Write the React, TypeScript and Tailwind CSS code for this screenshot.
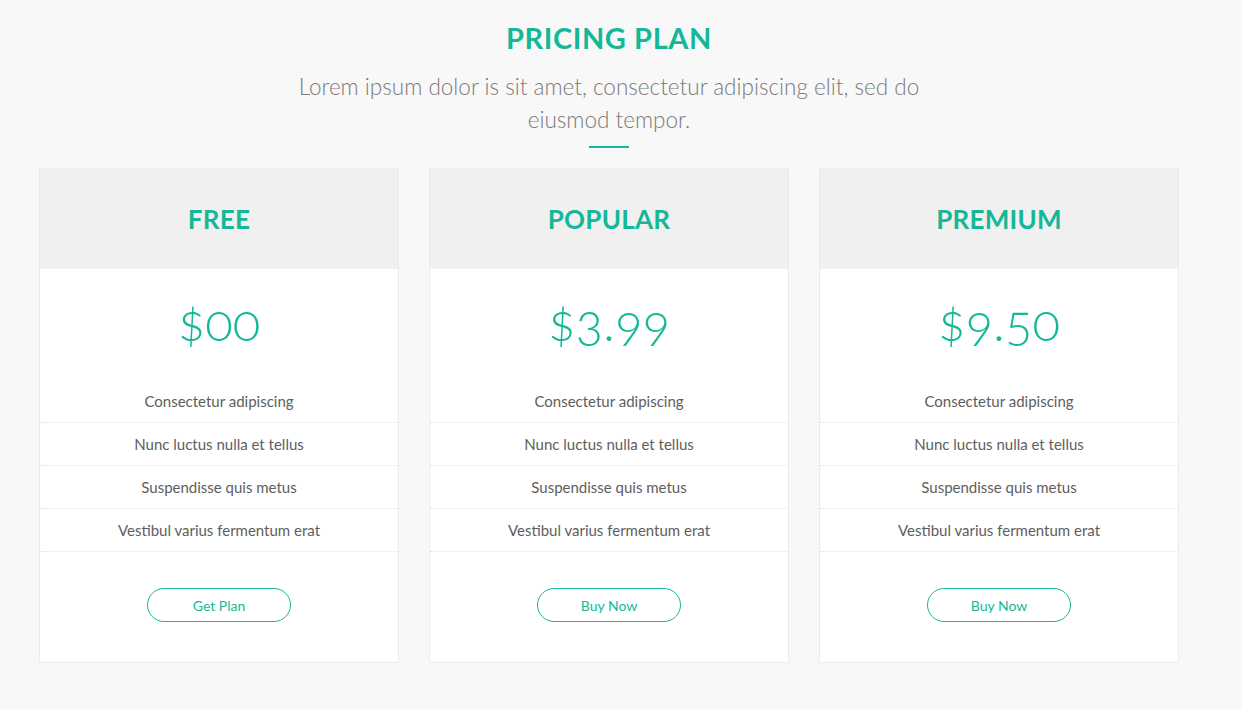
import React from 'react';

const plans = [
  { name: 'FREE', price: '$00', cta: 'Get Plan' },
  { name: 'POPULAR', price: '$3.99', cta: 'Buy Now' },
  { name: 'PREMIUM', price: '$9.50', cta: 'Buy Now' },
];

const features = [
  'Consectetur adipiscing',
  'Nunc luctus nulla et tellus',
  'Suspendisse quis metus',
  'Vestibul varius fermentum erat',
];

const PlanCard = ({ name, price, cta }: { name: string; price: string; cta: string }) => (
  <div className="w-[360px] bg-white border border-[#ececec] flex flex-col">
    <div className="h-[100px] bg-[#f0f0f0] flex items-center justify-center">
      <h3 className="text-[26px] font-bold text-[#14b898] tracking-[0.01em]">{name}</h3>
    </div>
    <div className="h-[111px] flex items-center justify-center pb-[7px]">
      <span className="text-[51px] font-light text-[#14b898] leading-none [font-feature-settings:'onum']">{price}</span>
    </div>
    <ul>
      {features.map((f) => (
        <li key={f} className="h-[43px] flex items-center justify-center text-[15px] text-[#5e5e5e] border-b border-dotted border-[#e3e3e3]">
          {f}
        </li>
      ))}
    </ul>
    <div className="flex justify-center pt-[36px] pb-[40px]">
      <button className="w-[144px] h-[34px] rounded-full border border-[#14b898] text-[14px] font-normal text-[#14b898] bg-white">
        {cta}
      </button>
    </div>
  </div>
);

export default function App() {
  return (
    <div className="min-h-[709px] bg-[#f8f8f8] font-['Lato',sans-serif] pt-[20px]">
      <div className="w-[1140px] ml-[39px] flex flex-col items-center">
        <h2 className="text-[29px] leading-[36px] font-bold text-[#14b898] tracking-[0.02em]">PRICING PLAN</h2>
        <p className="mt-[14px] w-[680px] text-center text-[22.5px] leading-[33px] font-light text-[#7a7a7a]">
          Lorem ipsum dolor is sit amet, consectetur adipiscing elit, sed do eiusmod tempor.
        </p>
        <div className="mt-[10px] w-[40px] h-[2px] bg-[#14b898]" />
        <div className="mt-[20px] flex gap-[30px]">
          {plans.map((p) => (
            <PlanCard key={p.name} {...p} />
          ))}
        </div>
      </div>
    </div>
  );
}
